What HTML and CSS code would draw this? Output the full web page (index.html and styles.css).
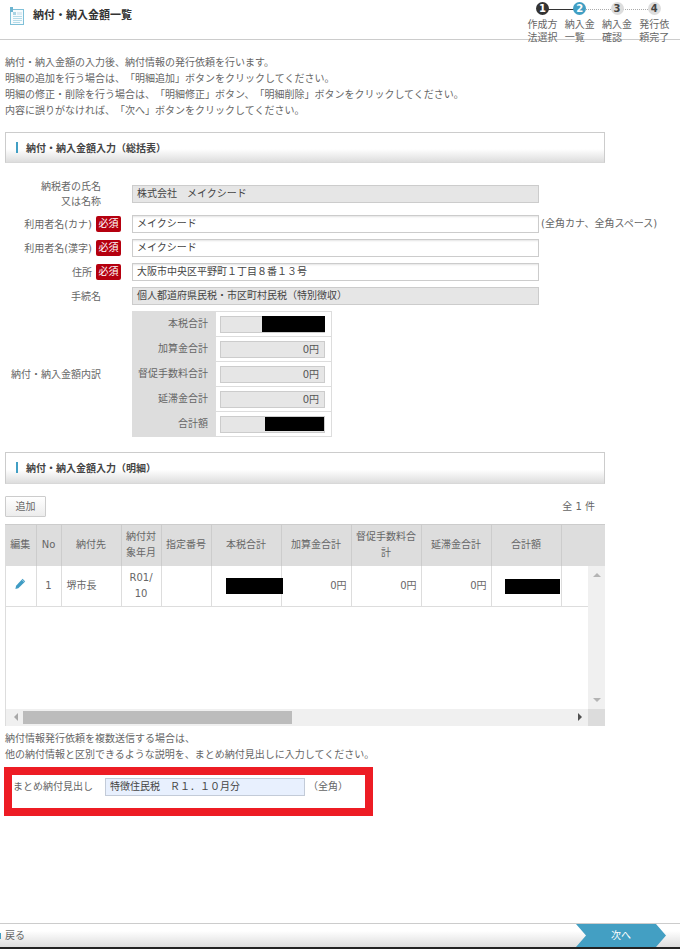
FILE: index.html
```html
<!DOCTYPE html>
<html lang="ja">
<head>
<meta charset="utf-8">
<title>納付・納入金額一覧</title>
<link rel="stylesheet" href="styles.css">
</head>
<body>
<header class="top">
  <svg class="doc-icon" width="15" height="18" viewBox="0 0 15 18">
    <rect x="0.5" y="2.5" width="13" height="15" fill="#f7fbfd" stroke="#7fc0d8"/>
    <rect x="0" y="0" width="3" height="5" fill="#6db4d0"/>
    <rect x="3" y="5" width="3" height="3" fill="#a9d3e3"/>
    <rect x="7" y="5" width="5" height="3" fill="#dcebf2"/>
    <path d="M3 9.5h9M3 11.5h9M3 13.5h9M3 15.5h7" stroke="#b5dbe8" fill="none"/>
  </svg>
  <h1 class="page-title">納付・納入金額一覧</h1>
  <ol class="steps">
    <li class="step done"><span class="dot">1</span><span class="step-label">作成方<br>法選択</span></li>
    <li class="step now"><span class="dot">2</span><span class="step-label">納入金<br>一覧</span></li>
    <li class="step"><span class="dot">3</span><span class="step-label">納入金<br>確認</span></li>
    <li class="step"><span class="dot">4</span><span class="step-label">発行依<br>頼完了</span></li>
  </ol>
</header>

<main class="main">
  <div class="intro">
    <p>納付・納入金額の入力後、納付情報の発行依頼を行います。</p>
    <p>明細の追加を行う場合は、「明細追加」ボタンをクリックしてください。</p>
    <p>明細の修正・削除を行う場合は、「明細修正」ボタン、「明細削除」ボタンをクリックしてください。</p>
    <p>内容に誤りがなければ、「次へ」ボタンをクリックしてください。</p>
  </div>

  <h2 class="sec-head">納付・納入金額入力（総括表）</h2>

  <div class="form">
    <div class="lbl">納税者の氏名<br>又は名称</div>
    <div class="field ro">株式会社　メイクシード</div>
    <div></div>

    <div class="lbl req">利用者名(カナ)<span class="badge">必須</span></div>
    <div class="field">メイクシード</div>
    <div class="note">(全角カナ、全角スペース)</div>

    <div class="lbl req">利用者名(漢字)<span class="badge">必須</span></div>
    <div class="field">メイクシード</div>
    <div></div>

    <div class="lbl req">住所<span class="badge">必須</span></div>
    <div class="field">大阪市中央区平野町１丁目８番１３号</div>
    <div></div>

    <div class="lbl">手続名</div>
    <div class="field ro">個人都道府県民税・市区町村民税（特別徴収）</div>
    <div></div>

    <div class="lbl">納付・納入金額内訳</div>
    <table class="sum">
      <tr><th>本税合計</th><td><div class="amount"><span class="mask mask-a"></span></div></td></tr>
      <tr><th>加算金合計</th><td><div class="amount">0円</div></td></tr>
      <tr><th>督促手数料合計</th><td><div class="amount">0円</div></td></tr>
      <tr><th>延滞金合計</th><td><div class="amount">0円</div></td></tr>
      <tr><th>合計額</th><td><div class="amount last"><span class="mask mask-b"></span></div></td></tr>
    </table>
    <div></div>
  </div>

  <h2 class="sec-head second">納付・納入金額入力（明細）</h2>

  <div class="tools">
    <button class="add" type="button">追加</button>
    <span class="count">全 1 件</span>
  </div>

  <div class="grid">
    <table class="cols head">
      <colgroup>
        <col class="c1"><col class="c2"><col class="c3"><col class="c4"><col class="c5"><col class="c6"><col class="c7"><col class="c8"><col class="c9"><col class="c10"><col class="c11h">
      </colgroup>
      <tr>
        <th>編集</th><th>No</th><th>納付先</th><th>納付対象年月</th><th>指定番号</th><th>本税合計</th><th>加算金合計</th><th>督促手数料合計</th><th>延滞金合計</th><th>合計額</th><th></th>
      </tr>
    </table>
    <div class="grid-mid">
      <div class="grid-body">
        <table class="cols body">
          <colgroup>
            <col class="c1"><col class="c2"><col class="c3"><col class="c4"><col class="c5"><col class="c6"><col class="c7"><col class="c8"><col class="c9"><col class="c10"><col class="c11">
          </colgroup>
          <tr>
            <td class="ctr">
              <svg class="pencil" width="11" height="11" viewBox="0 0 11 11"><path d="M7.6 0.8l2.6 2.6-6.9 6.9L0.4 11l0.7-3.3z" fill="#3f9cc4"/><path d="M6.8 1.6l2.6 2.6" stroke="#fff" stroke-width="0.5" fill="none"/></svg>
            </td>
            <td class="ctr">1</td>
            <td>堺市長</td>
            <td class="ctr">R01/<br>10</td>
            <td></td>
            <td class="num"><span class="mask mask-c"></span></td>
            <td class="num">0円</td>
            <td class="num">0円</td>
            <td class="num">0円</td>
            <td class="num"><span class="mask mask-d"></span></td>
            <td></td>
          </tr>
        </table>
      </div>
      <div class="vbar"><span class="tri up"></span><span class="tri down"></span></div>
    </div>
    <div class="grid-foot">
      <div class="hbar"><span class="tri left"></span><span class="thumb"></span><span class="tri right"></span></div>
      <div class="corner"></div>
    </div>
  </div>

  <div class="after">
    <p>納付情報発行依頼を複数送信する場合は、</p>
    <p>他の納付情報と区別できるような説明を、まとめ納付見出しに入力してください。</p>
  </div>

  <div class="highlight">
    <span class="hl-label">まとめ納付見出し</span>
    <div class="hl-field">特徴住民税　Ｒ１．１０月分</div>
    <span class="hl-note">（全角）</span>
  </div>
</main>

<footer class="bottom">
  <span class="back-mark"></span>
  <span class="back">戻る</span>
  <span class="next">次へ</span>
</footer>
</body>
</html>
```

FILE: styles.css
```css
* { box-sizing: border-box; }
html, body { margin: 0; padding: 0; height: 100%; }
body {
  display: flex;
  flex-direction: column;
  height: 949px;
  overflow: hidden;
  background: #fff;
  color: #666;
  font-family: "DejaVu Sans", "Noto Sans CJK JP", sans-serif;
  font-size: 10px;
  line-height: 16px;
  text-spacing-trim: space-all;
  font-feature-settings: "palt" 0;
}
p, h1, h2, ol { margin: 0; padding: 0; }

.top {
  flex: none;
  display: flex;
  align-items: flex-start;
  height: 40px;
  border-bottom: 1px solid #ccc;
  padding-left: 10px;
}
.doc-icon { margin-top: 7px; flex: none; }
.page-title {
  margin: 8px 0 0 8px;
  font-size: 11px;
  line-height: 16px;
  font-weight: 700;
  color: #333;
}
.steps {
  list-style: none;
  display: flex;
  margin-left: auto;
  margin-right: 7px;
  margin-top: 2px;
  height: 42px;
}
.step {
  position: relative;
  width: 37.3px;
  display: flex;
  flex-direction: column;
  align-items: center;
}
.step::after {
  content: "";
  position: absolute;
  left: 50%;
  top: 7px;
  width: 100%;
  border-top: 1px dotted #aaa;
}
.step:last-child::after { display: none; }
.step.done::after { border-top: 1px solid #333; }
.dot {
  position: relative;
  z-index: 1;
  width: 13px;
  height: 13px;
  border-radius: 50%;
  background: #ddd;
  color: #444;
  font-size: 10px;
  font-weight: 700;
  line-height: 13px;
  text-align: center;
}
.done .dot { background: #333; color: #fff; }
.now .dot { background: #419fc4; color: #fff; }
.step-label {
  margin-top: 3px;
  line-height: 13px;
  white-space: nowrap;
  color: #666;
}

.main { flex: 1; min-height: 0; padding-left: 5px; }
.intro { margin-top: 15px; }

.sec-head {
  width: 600px;
  height: 31px;
  margin-top: 13px;
  padding-left: 20px;
  border: 1px solid #ccc;
  border-bottom-color: #d8d8d8;
  background: linear-gradient(#fff 0, #fff 55%, #ddd 100%);
  color: #444;
  font-size: 10px;
  font-weight: 700;
  line-height: 31px;
  position: relative;
}
.sec-head::before {
  content: "";
  position: absolute;
  left: 10px;
  top: 9px;
  width: 2px;
  height: 11px;
  background: #419fc4;
}
.sec-head.second { height: 32px; margin-top: 15px; }

.form {
  display: grid;
  grid-template-columns: 127px 407px 130px;
  row-gap: 6px;
  align-items: center;
  margin-top: 16px;
}
.lbl {
  display: flex;
  justify-content: flex-end;
  align-items: center;
  padding-right: 31px;
  text-align: right;
  line-height: 15px;
}
.lbl:first-child { display: block; }
.lbl.req { padding-right: 11px; }
.badge {
  width: 25px;
  height: 16px;
  margin-left: 4px;
  border-radius: 2px;
  background: #b5000f;
  color: #fff;
  text-align: center;
  line-height: 16px;
}
.field {
  height: 18px;
  padding: 0 4px;
  border: 1px solid #ccc;
  box-shadow: inset 0 2px 2px -1px #e4e4e4;
  color: #444;
  line-height: 16px;
  white-space: nowrap;
  overflow: hidden;
}
.field.ro { background: #e6e6e6; }
.note { padding-left: 2px; white-space: nowrap; }

.sum {
  width: 200px;
  border-collapse: collapse;
  table-layout: fixed;
}
.sum th, .sum td {
  height: 25px;
  padding: 0;
  border: 1px solid #ddd;
}
.sum th {
  width: 83px;
  padding-right: 7px;
  background: #ddd;
  font-weight: 400;
  text-align: right;
  white-space: nowrap;
}
.sum td { padding-left: 4px; padding-right: 6px; }
.amount {
  display: flex;
  justify-content: flex-end;
  align-items: center;
  height: 17px;
  padding-right: 5px;
  border: 1px solid #ccc;
  background: #e6e6e6;
  line-height: 15px;
  color: #555;
}
.mask { display: block; background: #000; }
.mask-a { width: 63px; height: 16px; margin-right: -6px; }
.mask-b { width: 59px; height: 14px; margin-right: -5px; }

.tools {
  display: flex;
  justify-content: space-between;
  align-items: flex-end;
  width: 590px;
  margin-top: 12px;
}
.add {
  width: 41px;
  height: 21px;
  padding: 0;
  border: 1px solid #ccc;
  border-radius: 1px;
  background: linear-gradient(#fff, #ececec);
  color: #666;
  font: inherit;
  line-height: 18px;
}
.count { line-height: 20px; }

.grid { width: 600px; margin-top: 7px; }
.cols { border-collapse: collapse; table-layout: fixed; }
.head { width: 600px; }
.body { width: 583px; }
.c1 { width: 31px; } .c2 { width: 25px; } .c3 { width: 60px; } .c4 { width: 40px; }
.c5 { width: 50px; } .c6, .c7, .c8, .c9, .c10 { width: 70px; }
.c11h { width: 44px; } .c11 { width: 27px; }
.head th {
  height: 41px;
  padding: 0 4px;
  border-top: 1px solid #ccc;
  border-right: 1px solid #ccc;
  background: #ddd;
  font-weight: 400;
  line-height: 16px;
  text-align: center;
}
.head th:last-child { border-right: 0; }
.grid-mid { display: flex; height: 143px; }
.grid-body { width: 583px; border-left: 1px solid #ddd; }
.body { margin-left: -1px; }
.body td {
  position: relative;
  height: 41px;
  padding: 1px 5px 0;
  border-right: 1px solid #ddd;
  border-bottom: 1px solid #ddd;
  line-height: 16px;
}
.body td:last-child { border-right: 0; }
.ctr { text-align: center; }
.body td.ctr { padding: 1px 0 0; }
.num { text-align: right; }
.body td.num { padding: 1px 4px 0 0; }
.pencil { display: block; margin: 0 auto 6px; }
.mask-c { position: absolute; left: 14px; top: 12px; width: 57px; height: 16px; }
.mask-d { position: absolute; left: 13px; top: 13px; width: 55px; height: 15px; }

.vbar {
  width: 17px;
  background: #f0f0f0;
  display: flex;
  flex-direction: column;
  justify-content: space-between;
  align-items: center;
  padding: 7px 0;
}
.tri { display: block; width: 0; height: 0; border-style: solid; }
.tri.up { border-width: 0 4px 4px; border-color: transparent transparent #b4b4b4; }
.tri.down { border-width: 4px 4px 0; border-color: #b4b4b4 transparent transparent; }
.tri.left { border-width: 4px 4px 4px 0; border-color: transparent #a8a8a8 transparent transparent; margin-left: 8px; }
.tri.right { border-width: 4px 0 4px 4px; border-color: transparent transparent transparent #505050; margin-left: auto; margin-right: 6px; }
.grid-foot { display: flex; height: 17px; }
.hbar {
  display: flex;
  align-items: center;
  width: 583px;
  border-left: 1px solid #ddd;
  background: #f0f0f0;
}
.thumb { width: 269px; height: 13px; margin-left: 5px; background: #bcbcbc; }
.corner { width: 17px; background: #dcdcdc; }

.after { margin-top: 5px; }

.highlight {
  display: flex;
  align-items: flex-start;
  width: 369px;
  height: 49px;
  margin-top: 4px;
  margin-left: -1px;
  padding: 3px 0 0 1px;
  border: 8px solid #ed1c24;
  color: #666;
  line-height: 18px;
}
.hl-label { width: 92px; white-space: nowrap; }
.hl-field {
  width: 200px;
  height: 18px;
  padding: 0 4px;
  border: 1px solid #c3cbd8;
  background: #e8f0fe;
  color: #444;
  line-height: 16px;
  white-space: nowrap;
}
.hl-note { margin-left: 3px; white-space: nowrap; }

.bottom {
  flex: none;
  display: flex;
  align-items: stretch;
  height: 26px;
  border-top: 1px solid #ccc;
  border-bottom: 2px solid #222;
  background: linear-gradient(#fff 0, #fff 30%, #ddd 100%);
}
.back-mark { width: 1px; height: 6px; margin: 9px 4px 0 0; background: #419fc4; }
.back { line-height: 24px; color: #666; }
.next {
  width: 90px;
  margin-left: auto;
  margin-right: 14px;
  background: #439fc3;
  color: #fff;
  text-align: center;
  line-height: 24px;
  clip-path: polygon(0 0, 80px 0, 90px 50%, 80px 100%, 0 100%, 10px 50%);
}
```
